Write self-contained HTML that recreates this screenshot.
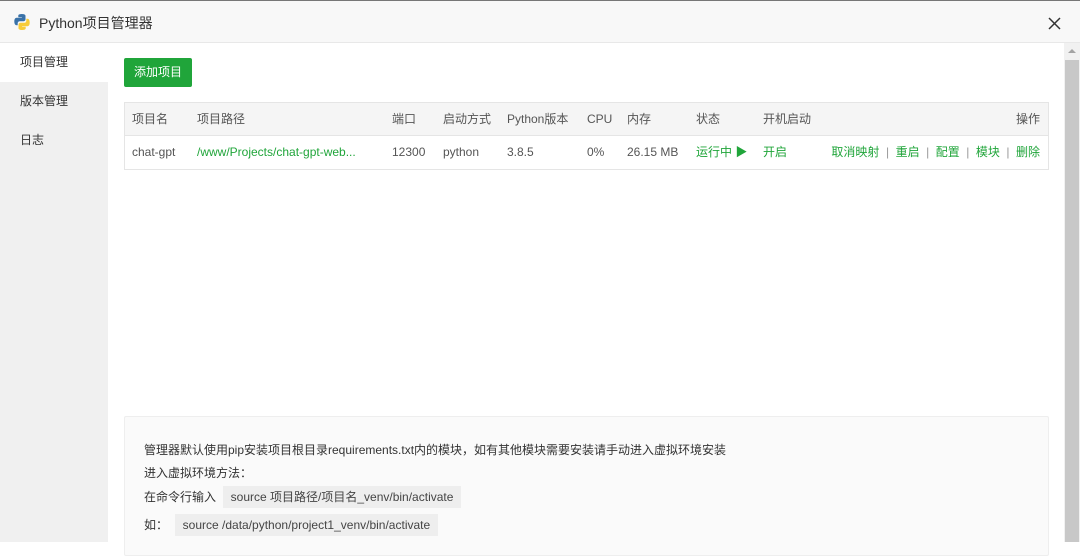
<!DOCTYPE html>
<html><head><meta charset="utf-8"><style>
*{margin:0;padding:0;box-sizing:border-box}
body{width:1080px;height:542px;overflow:hidden;background:#fff;font-family:"Liberation Sans","Noto Sans CJK SC",sans-serif;font-size:12px;color:#555;position:relative}
.title{position:absolute;left:0;top:0;width:1080px;height:43px;background:#f8f8f8;border-bottom:1px solid #e8e8e8;border-top:1px solid #777}
.title span{position:absolute;left:39px;top:12px;font-size:14px;color:#333}
.side{position:absolute;left:0;top:43px;width:108px;height:499px;background:#f0f0f0}
.side div{height:39px;line-height:39px;padding-left:20px;color:#333;font-size:12px}
.side .act{background:#fff}
.btn{position:absolute;left:124px;top:58px;width:68px;height:29px;background:#20a53a;color:#fff;border-radius:2px;line-height:29px;text-align:center;font-size:12px}
.tbl{position:absolute;left:124px;top:102px;width:925px;height:68px;border:1px solid #e5e5e5}
.hd{height:33px;background:#f5f5f5;border-bottom:1px solid #e5e5e5;position:relative}
.rw{height:33px;position:relative}
.tbl span{position:absolute;top:0;line-height:33px;white-space:nowrap}
.g{color:#20a53a}
.sep{color:#999;padding:0 6.5px;font-style:normal}
.box{position:absolute;left:124px;top:416px;width:925px;height:140px;background:#fafafa;border:1px solid #eee;border-radius:2px;color:#333}
.box p{position:absolute;left:19px;white-space:nowrap;line-height:20px}
code{background:#eee;padding:4px 8px;font-family:inherit;color:#444}
.sb{position:absolute;left:1064px;top:43px;width:16px;height:499px;background:#f1f1f1}
.th{position:absolute;left:1px;top:17px;width:14px;height:482px;background:#c8c8c8}
</style></head><body>
<div class="title">
<svg style="position:absolute;left:13px;top:12px" width="18" height="18" viewBox="0 0 18 18"><path d="M8.8 1C5 1 5.3 2.6 5.3 2.6V4.3h3.6v.5H3.8S1.3 4.5 1.3 8.4s2.1 3.8 2.1 3.8h1.3v-1.8s-.1-2.2 2.1-2.2h3.6s2.1 0 2.1-2V2.9S12.8 1 8.8 1z" fill="#3a72a8"/><path d="M9.2 17c3.8 0 3.5-1.6 3.5-1.6v-1.7H9.1v-.5h5.1s2.5.3 2.5-3.6-2.1-3.8-2.1-3.8h-1.3v1.8s.1 2.2-2.1 2.2H7.6s-2.1 0-2.1 2v3.3S5.2 17 9.2 17z" fill="#f7cc3a"/></svg>
<span>Python项目管理器</span>
<svg style="position:absolute;left:1048px;top:16px" width="13" height="13" viewBox="0 0 13 13"><path d="M1 1L12 12M12 1L1 12" stroke="#333" stroke-width="1.5"/></svg>
</div>
<div class="side"><div class="act">项目管理</div><div>版本管理</div><div>日志</div></div>
<div class="btn">添加项目</div>
<div class="tbl">
<div class="hd"><span style="left:7px">项目名</span><span style="left:72px">项目路径</span><span style="left:267px">端口</span><span style="left:318px">启动方式</span><span style="left:382px">Python版本</span><span style="left:462px">CPU</span><span style="left:502px">内存</span><span style="left:571px">状态</span><span style="left:638px">开机启动</span><span style="right:8px">操作</span></div>
<div class="rw"><span style="left:7px">chat-gpt</span><span class="g" style="left:72px">/www/Projects/chat-gpt-web...</span><span style="left:267px">12300</span><span style="left:318px">python</span><span style="left:382px">3.8.5</span><span style="left:462px">0%</span><span style="left:502px">26.15 MB</span><span class="g" style="left:571px">运行中 ▶</span><span class="g" style="left:638px">开启</span><span class="g" style="right:8px">取消映射<i class="sep">|</i>重启<i class="sep">|</i>配置<i class="sep">|</i>模块<i class="sep">|</i>删除</span></div>
</div>
<div class="box">
<p style="top:23px">管理器默认使用pip安装项目根目录requirements.txt内的模块，如有其他模块需要安装请手动进入虚拟环境安装</p>
<p style="top:46px">进入虚拟环境方法：</p>
<p style="top:70px">在命令行输入 &nbsp;<code>source 项目路径/项目名_venv/bin/activate</code></p>
<p style="top:98px">如： &nbsp;<code>source /data/python/project1_venv/bin/activate</code></p>
</div>
<div class="sb"><div style="position:absolute;left:4px;top:6px;border:4px solid transparent;border-bottom-color:#a3a3a3;border-top:0"></div><div class="th"></div></div>
</body></html>
